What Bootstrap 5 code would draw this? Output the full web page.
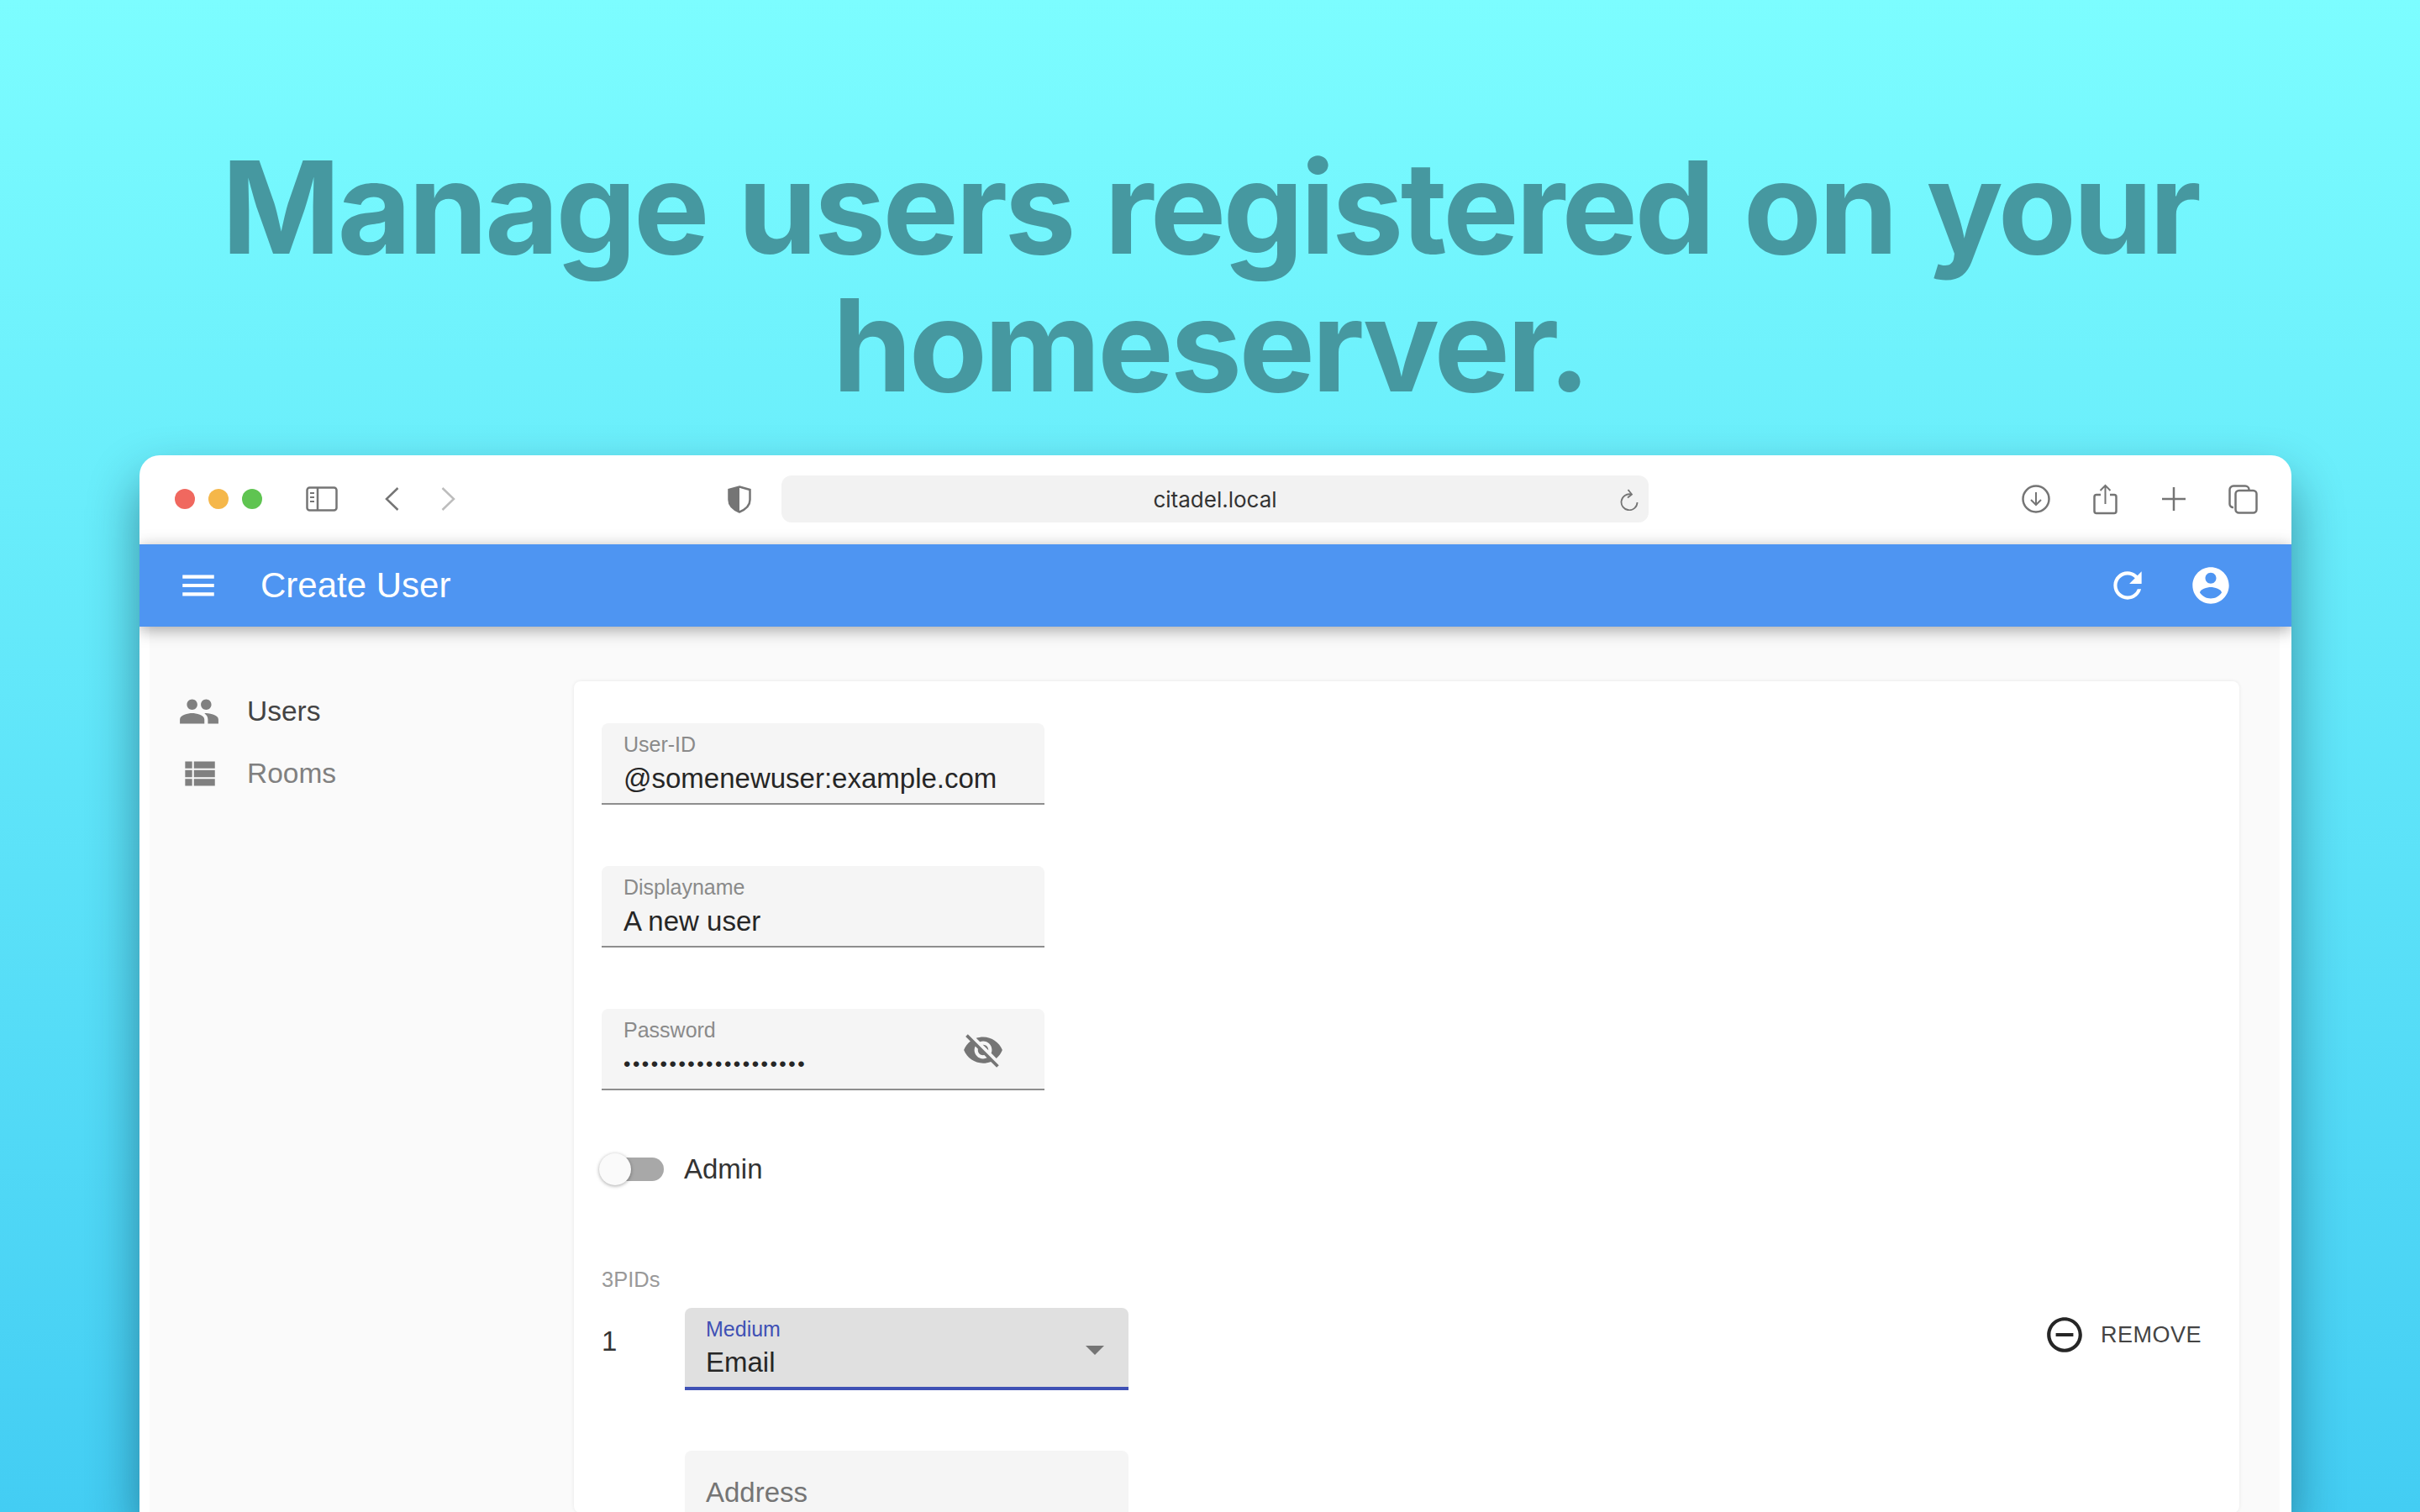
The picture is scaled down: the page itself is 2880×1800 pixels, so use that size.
<!DOCTYPE html>
<html lang="en">
<head>
    <meta charset="UTF-8">
    <title>Create User</title>
    <link href="https://cdn.jsdelivr.net/npm/bootstrap@5.3.0/dist/css/bootstrap.min.css" rel="stylesheet">
    <style>
        html, body {
            height: 1800px;
            overflow: hidden;
        }
        body {
            background: linear-gradient(180deg, #7cfdff 0%, #43cdf3 100%);
            font-family: "Liberation Sans", Arial, sans-serif;
        }
        .hero-title {
            font-family: Inter, "Liberation Sans", sans-serif;
            font-optical-sizing: none;
            font-variation-settings: "opsz" 14;
            font-weight: 700;
            font-size: 152px;
            line-height: 164px;
            letter-spacing: -3.7px;
            word-spacing: 5px;
            color: #4698a0;
            text-align: center;
            padding-top: 165px;
            margin: 0;
            height: 542px;
        }
        .browser-win {
            width: 2561px;
            height: 1258px;
            margin-left: 166px;
            background: #fff;
            border-radius: 24px 24px 0 0;
            box-shadow: 0 30px 60px rgba(0, 30, 50, .45);
            overflow: hidden;
        }
        .chrome-bar {
            height: 106px;
            padding: 0 40px 2px 42px;
        }
        .light {
            width: 24px;
            height: 24px;
            border-radius: 50%;
            margin-right: 16px;
        }
        .light-red { background: #f0685f; }
        .light-yellow { background: #f5b74a; }
        .light-green { background: #5fc451; }
        .side-toggle { margin-left: 36px; }
        .nav-back { margin-left: 56px; }
        .nav-fwd { margin-left: 50px; }
        .shield-ico { margin-left: 324px; }
        .url-box {
            width: 1032px;
            height: 56px;
            margin-left: 36px;
            background: #f2f2f2;
            border-radius: 12px;
            color: #333;
            font-size: 26px;
            font-family: Inter, sans-serif;
            position: relative;
        }
        .url-reload {
            position: absolute;
            right: 11px;
            top: 16px;
        }
        .chrome-icons-right {
            gap: 51px;
        }
        .plus-ico {
            margin-left: 2px;
        }
        .app-bar {
            height: 98px;
            background: #4e95f2;
            color: #fff;
            padding: 0 70px 0 45px;
            box-shadow: 0 4px 18px rgba(0, 0, 0, .35);
            position: relative;
        }
        .app-title {
            font-size: 42px;
            margin-left: 49px;
            padding-bottom: 2px;
        }
        .app-actions {
            gap: 48px;
        }
        .app-body {
            height: 1054px;
            margin: 0 14px 0 12px;
            background: #fafafa;
            padding-top: 64px;
        }
        .side-menu {
            width: 505px;
            padding-left: 34px;
            font-size: 33.5px;
        }
        .side-item {
            height: 74px;
            padding: 0;
            color: #808080;
        }
        .side-item.active-item {
            color: #444;
        }
        .side-ico {
            width: 82px;
        }
        .form-panel {
            display: block;
            width: 1982px;
            height: 990px;
            margin-top: 1px;
            border: 0;
            border-radius: 8px;
            background: #fff;
            box-shadow: 0 0 4px rgba(0, 0, 0, .08);
            padding: 50px 33px 0;
        }
        .fill-field {
            width: 527px;
            height: 97px;
            background: #f5f5f5;
            border-bottom: 2px solid #8e8e8e;
            border-radius: 8px 8px 0 0;
            padding: 11px 26px 0;
            margin-bottom: 73px;
            position: relative;
        }
        .fill-label {
            font-size: 25px;
            line-height: 28px;
            color: #8a8a8a;
        }
        .fill-value {
            font-size: 33px;
            line-height: 40px;
            color: #262626;
            margin-top: 7px;
            white-space: nowrap;
        }
        .pw-dots {
            font-size: 24px;
            letter-spacing: 2.5px;
        }
        .eye-btn {
            position: absolute;
            right: 48px;
            top: 24px;
        }
        .admin-row {
            height: 44px;
            margin-top: -1px;
            margin-bottom: 95px;
            font-size: 33px;
            color: #333;
        }
        .switch-track {
            width: 74px;
            height: 28px;
            position: relative;
            margin-right: 24px;
            background: #a8a8a8;
            border-radius: 14px;
        }
        .switch-thumb {
            position: absolute;
            left: -3px;
            top: -5px;
            width: 38px;
            height: 38px;
            border-radius: 50%;
            background: #fafafa;
            box-shadow: 0 1px 4px rgba(0, 0, 0, .35);
        }
        .pid-title {
            font-size: 25.5px;
            line-height: 28px;
            color: #999;
            margin-bottom: 20px;
        }
        .pid-num {
            width: 99px;
            font-size: 33px;
            line-height: 40px;
            color: #333;
            padding-top: 20px;
        }
        .select-field {
            width: 528px;
            height: 98px;
            margin-bottom: 0;
            padding-left: 25px;
            background: #e0e0e0;
            border-bottom: 4px solid #3f51b5;
        }
        .select-field .fill-label {
            color: #3f51b5;
        }
        .select-field .fill-value {
            margin-top: 6px;
        }
        .select-arrow {
            position: absolute;
            right: 29px;
            top: 45px;
            width: 0;
            height: 0;
            border-left: 11px solid transparent;
            border-right: 11px solid transparent;
            border-top: 11px solid #757575;
        }
        .remove-btn {
            height: 50px;
            margin-top: 7px;
            margin-right: 12px;
            padding: 0;
            border: 0;
            color: #444;
            font-size: 27px;
            letter-spacing: .5px;
            gap: 18px;
        }
        .addr-field {
            width: 528px;
            height: 140px;
            margin: 72px 0 0 99px;
            border: 0;
            padding: 30px 25px 0;
            font-size: 33px;
            line-height: 40px;
            color: #757575;
        }
    </style>
</head>
<body>
    <h1 class="hero-title">Manage users registered on your<br>homeserver.</h1>

    <div class="browser-win">
        <!-- Browser toolbar -->
        <div class="chrome-bar d-flex align-items-center">
            <span class="light light-red"></span>
            <span class="light light-yellow"></span>
            <span class="light light-green"></span>
            <svg class="side-toggle" width="38" height="30" viewBox="0 0 38 30" fill="none" stroke="#757575" stroke-width="2.5"><rect x="1.500" y="1.500" width="35" height="27" rx="3"/><path d="M14 1.500v27"/><path d="M5 8h5M5 13h5M5 18h5" stroke-width="2"/></svg>
            <svg class="nav-back" width="17" height="28" viewBox="0 0 17 28" fill="none" stroke="#757575" stroke-width="2.500"><path d="M15.500 1 2 14l13.500 13"/></svg>
            <svg class="nav-fwd" width="17" height="28" viewBox="0 0 17 28" fill="none" stroke="#bdbdbd" stroke-width="2.500"><path d="M1.500 1 15 14 1.500 27"/></svg>
            <svg class="shield-ico" width="28" height="33" viewBox="0 0 28 33"><path d="M14 1.500 26.500 5v12c0 7-6.500 12-12.500 14.500C8 29 1.500 24 1.500 17V5z" fill="none" stroke="#757575" stroke-width="2.500"/><path d="M14 1.500V31.500C8 29 1.500 24 1.500 17V5z" fill="#757575"/></svg>
            <div class="url-box d-flex align-items-center justify-content-center">
                <span>citadel.local</span>
                <svg class="url-reload" width="24" height="26" viewBox="0 0 24 26" fill="none" stroke="#757575" stroke-width="1.800"><path d="M14 6.500A9.500 9.500 0 1 0 21.500 16"/><path d="M10.500 1 15 6.500 10 10.500"/></svg>
            </div>
            <div class="chrome-icons-right d-flex align-items-center ms-auto">
                <svg width="34" height="34" viewBox="0 0 34 34" fill="none" stroke="#757575" stroke-width="2.500"><circle cx="17" cy="17" r="15.500"/><path d="M17 9v15M11 18l6 6 6-6" stroke-width="2"/></svg>
                <svg width="29" height="37" viewBox="0 0 29 37" fill="none" stroke="#757575" stroke-width="2.500"><path d="M9 13H4a2.500 2.500 0 0 0-2.500 2.500v17A2.500 2.500 0 0 0 4 35h21a2.500 2.500 0 0 0 2.500-2.500v-17A2.500 2.500 0 0 0 25 13h-5"/><path d="M14.500 24V2M8.500 8l6-6 6 6" stroke-width="2"/></svg>
                <svg class="plus-ico" width="28" height="28" viewBox="0 0 28 28" fill="none" stroke="#757575" stroke-width="2.500"><path d="M14 0v28M0 14h28"/></svg>
                <svg width="35" height="35" viewBox="0 0 35 35" fill="none" stroke="#757575" stroke-width="2.500"><path d="M6 27a4 4 0 0 1-4.500-4V6A4.500 4.500 0 0 1 6 1.500h14A4.500 4.500 0 0 1 24.500 6"/><rect x="8.500" y="7" width="25" height="26.500" rx="4"/></svg>
            </div>
        </div>

        <!-- App bar -->
        <nav class="navbar flex-nowrap app-bar">
            <div class="d-flex align-items-center">
                <svg width="50" height="50" viewBox="0 0 24 24" fill="#fff"><path d="M3 18h18v-2H3v2zm0-5h18v-2H3v2zm0-7v2h18V6H3z"/></svg>
                <span class="app-title">Create User</span>
            </div>
            <div class="app-actions d-flex align-items-center">
                <svg width="50" height="50" viewBox="0 0 24 24" fill="#fff"><path d="M17.650 6.350C16.200 4.900 14.210 4 12 4c-4.420 0-7.990 3.580-7.990 8s3.570 8 7.990 8c3.730 0 6.840-2.550 7.730-6h-2.080c-.82 2.330-3.040 4-5.650 4-3.310 0-6-2.690-6-6s2.690-6 6-6c1.660 0 3.140.69 4.220 1.780L13 11h7V4l-2.350 2.350z"/></svg>
                <svg width="52" height="52" viewBox="0 0 24 24" fill="#fff"><path d="M12 2C6.480 2 2 6.480 2 12s4.480 10 10 10 10-4.480 10-10S17.520 2 12 2zm0 3c1.660 0 3 1.340 3 3s-1.340 3-3 3-3-1.340-3-3 1.340-3 3-3zm0 14.200c-2.500 0-4.710-1.280-6-3.220.03-1.990 4-3.080 6-3.080 1.990 0 5.970 1.090 6 3.080-1.290 1.940-3.500 3.220-6 3.220z"/></svg>
            </div>
        </nav>

        <div class="app-body d-flex align-items-start">
            <!-- Sidebar -->
            <div class="side-menu nav flex-column">
                <a class="side-item active-item nav-link d-flex align-items-center" href="#">
                    <span class="side-ico d-flex">
                        <svg width="50" height="50" viewBox="0 0 24 24" fill="#808080"><path d="M16 11c1.660 0 2.990-1.340 2.990-3S17.660 5 16 5c-1.660 0-3 1.340-3 3s1.340 3 3 3zm-8 0c1.660 0 2.990-1.340 2.990-3S9.660 5 8 5C6.340 5 5 6.340 5 8s1.340 3 3 3zm0 2c-2.330 0-7 1.170-7 3.500V19h14v-2.500c0-2.330-4.670-3.500-7-3.500zm8 0c-.29 0-.62.02-.97.05 1.160.84 1.970 1.970 1.970 3.450V19h6v-2.500c0-2.330-4.670-3.500-7-3.500z"/></svg>
                    </span>
                    Users
                </a>
                <a class="side-item nav-link d-flex align-items-center" href="#">
                    <span class="side-ico d-flex">
                        <svg width="50" height="50" viewBox="0 0 24 24" fill="#808080"><path d="M4 14h4v-4H4v4zm0 5h4v-4H4v4zm0-10h4V5H4v4zm5 5h12v-4H9v4zm0 5h12v-4H9v4zM9 5v4h12V5H9z"/></svg>
                    </span>
                    Rooms
                </a>
            </div>

            <!-- Form -->
            <div class="card form-panel">
                <div class="fill-field">
                    <div class="fill-label">User-ID</div>
                    <div class="fill-value">@somenewuser:example.com</div>
                </div>
                <div class="fill-field">
                    <div class="fill-label">Displayname</div>
                    <div class="fill-value">A new user</div>
                </div>
                <div class="fill-field">
                    <div class="fill-label">Password</div>
                    <div class="fill-value pw-dots">••••••••••••••••••••</div>
                    <svg class="eye-btn" width="50" height="50" viewBox="0 0 24 24" fill="#757575"><path d="M12 7c2.760 0 5 2.240 5 5 0 .65-.13 1.260-.36 1.830l2.920 2.920c1.510-1.260 2.700-2.890 3.430-4.750-1.730-4.390-6-7.500-11-7.500-1.400 0-2.740.25-3.980.7l2.160 2.160C10.740 7.130 11.350 7 12 7zM2 4.270l2.280 2.280.46.46C3.080 8.300 1.780 10.020 1 12c1.730 4.390 6 7.500 11 7.500 1.550 0 3.030-.3 4.380-.84l.42.42L19.730 22 21 20.730 3.270 3 2 4.270zM7.530 9.800l1.550 1.550c-.05.21-.08.43-.08.65 0 1.660 1.340 3 3 3 .22 0 .44-.03.65-.08l1.550 1.550c-.67.33-1.410.53-2.200.53-2.760 0-5-2.240-5-5 0-.79.2-1.530.53-2.200zm4.310-.78l3.150 3.150.02-.16c0-1.660-1.340-3-3-3l-.17.01z"/></svg>
                </div>

                <div class="admin-row d-flex align-items-center">
                    <div class="switch-track"><span class="switch-thumb"></span></div>
                    Admin
                </div>

                <div class="pid-title">3PIDs</div>
                <div class="d-flex align-items-start justify-content-between">
                    <div class="d-flex">
                        <div class="pid-num">1</div>
                        <div class="fill-field select-field">
                            <div class="fill-label">Medium</div>
                            <div class="fill-value">Email</div>
                            <span class="select-arrow"></span>
                        </div>
                    </div>
                    <button class="btn remove-btn d-flex align-items-center" type="button">
                        <svg width="50" height="50" viewBox="0 0 24 24" fill="#262626"><path d="M7 11v2h10v-2H7zm5-9C6.480 2 2 6.480 2 12s4.480 10 10 10 10-4.480 10-10S17.520 2 12 2zm0 18c-4.410 0-8-3.590-8-8s3.590-8 8-8 8 3.590 8 8-3.590 8-8 8z"/></svg>
                        REMOVE
                    </button>
                </div>
                <div class="fill-field addr-field">Address</div>
            </div>
        </div>
    </div>
</body>
</html>
